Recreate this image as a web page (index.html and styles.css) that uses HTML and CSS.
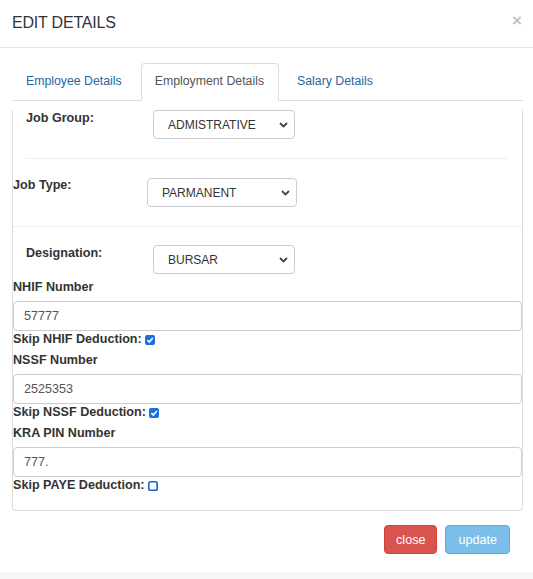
FILE: index.html
```html
<!DOCTYPE html>
<html lang="en">
<head>
    <meta charset="UTF-8">
    <meta name="viewport" content="width=device-width, initial-scale=1.0">
    <title>Edit Details</title>
    <link rel="stylesheet" href="styles.css">
</head>
<body>
    <div class="modal">
        <!-- Header -->
        <div class="modal-header">
            <h4 class="modal-title">EDIT DETAILS</h4>
            <span class="close">&times;</span>
        </div>

        <!-- Body with tabs -->
        <div class="modal-body">
            <ul class="nav-tabs">
                <li><a href="#">Employee Details</a></li>
                <li class="active"><a href="#">Employment Details</a></li>
                <li><a href="#">Salary Details</a></li>
            </ul>

            <div class="tab-panel">
                <div class="select-row indented">
                    <label>Job Group:</label>
                    <div class="select-wrap">
                        <select><option>ADMISTRATIVE</option></select>
                        <svg class="chevron" width="9" height="6" viewBox="0 0 9 6"><path d="M1 1 L4.5 4.5 L8 1" fill="none" stroke="#444" stroke-width="1.8"/></svg>
                    </div>
                </div>
                <hr class="divider-short">

                <div class="select-row">
                    <label class="wide">Job Type:</label>
                    <div class="select-wrap">
                        <select class="long"><option>PARMANENT</option></select>
                        <svg class="chevron" width="9" height="6" viewBox="0 0 9 6"><path d="M1 1 L4.5 4.5 L8 1" fill="none" stroke="#444" stroke-width="1.8"/></svg>
                    </div>
                </div>
                <hr class="divider-full">

                <div class="select-row indented row-last">
                    <label>Designation:</label>
                    <div class="select-wrap">
                        <select><option>BURSAR</option></select>
                        <svg class="chevron" width="9" height="6" viewBox="0 0 9 6"><path d="M1 1 L4.5 4.5 L8 1" fill="none" stroke="#444" stroke-width="1.8"/></svg>
                    </div>
                </div>

                <label class="field-label">NHIF Number</label>
                <input class="form-control" type="text" value="57777">
                <div class="skip-row">
                    <span>Skip NHIF Deduction:</span>
                    <svg class="check" width="10" height="10" viewBox="0 0 10 10"><rect width="10" height="10" rx="2" fill="#1b6fe2"/><path d="M2.4 5.1 L4.3 7 L7.8 2.9" fill="none" stroke="#fff" stroke-width="1.6"/></svg>
                </div>

                <label class="field-label">NSSF Number</label>
                <input class="form-control" type="text" value="2525353">
                <div class="skip-row">
                    <span>Skip NSSF Deduction:</span>
                    <svg class="check" width="10" height="10" viewBox="0 0 10 10"><rect width="10" height="10" rx="2" fill="#1b6fe2"/><path d="M2.4 5.1 L4.3 7 L7.8 2.9" fill="none" stroke="#fff" stroke-width="1.6"/></svg>
                </div>

                <label class="field-label">KRA PIN Number</label>
                <input class="form-control" type="text" value="777.">
                <div class="skip-row">
                    <span>Skip PAYE Deduction:</span>
                    <svg class="check" width="10" height="10" viewBox="0 0 10 10"><rect x="0.8" y="0.8" width="8.4" height="8.4" rx="1.8" fill="#fff" stroke="#1a5fd2" stroke-width="1.6"/></svg>
                </div>
            </div>
        </div>

        <!-- Footer -->
        <div class="modal-footer">
            <button class="btn btn-danger">close</button>
            <button class="btn btn-primary" disabled>update</button>
        </div>
    </div>
</body>
</html>
```

FILE: styles.css
```css
/* General styling */
html {
    background-color: #f6f6f6;
}
body {
    margin: 0;
    font-family: "Liberation Sans", Arial, Helvetica, sans-serif;
    font-size: 12.6px;
    color: #333;
}
.modal {
    background-color: #fff;
    width: 533px;
}
/* Header */
.modal-header {
    display: flex;
    justify-content: space-between;
    align-items: flex-start;
    padding: 13px 12px 14px 12px;
    border-bottom: 1px solid #e5e5e5;
}
.modal-title {
    margin: 0;
    font-size: 16px;
    font-weight: normal;
    line-height: 20px;
    letter-spacing: -0.2px;
    color: #333;
}
.close {
    font-size: 17px;
    font-weight: bold;
    line-height: 16px;
    color: #c4c4c4;
    margin-right: -1px;
}
/* Tabs */
.modal-body {
    padding: 15px 10px 0 12px;
}
.nav-tabs {
    display: flex;
    list-style: none;
    margin: 0;
    padding: 0;
    border-bottom: 1px solid #ddd;
}
.nav-tabs li {
    margin-right: 4px;
    margin-bottom: -1px;
}
.nav-tabs a {
    display: block;
    padding: 10px 14px 11px 13px;
    font-size: 12.3px;
    line-height: 15px;
    border: 1px solid transparent;
    border-radius: 4px 4px 0 0;
    color: #23679f;
    text-decoration: none;
}
.nav-tabs .active a {
    color: #555;
    background-color: #fff;
    border-color: #ddd;
    border-bottom-color: transparent;
}
.tab-panel {
    border: 1px solid #ddd;
    border-top: none;
    border-radius: 0 0 4px 4px;
    padding-bottom: 17px;
}
/* Select rows */
.select-row {
    display: flex;
    align-items: flex-start;
    margin-top: 9px;
}
.select-row.indented {
    padding-left: 13px;
}
.select-row.row-last {
    margin-top: 18px;
}
.select-row label {
    width: 127px;
    font-weight: bold;
    line-height: 15px;
    padding-top: 1px;
}
.select-row label.wide {
    width: 134px;
    padding-top: 0;
}
.divider-short + .select-row {
    margin-top: 19px;
}
.select-wrap {
    position: relative;
}
.select-wrap select {
    appearance: none;
    -webkit-appearance: none;
    width: 142px;
    height: 29px;
    padding: 0 14px;
    border: 1px solid #ccc;
    border-radius: 4px;
    background-color: #fff;
    font-family: inherit;
    font-size: 12px;
    color: #333;
}
.select-wrap select.long {
    width: 150px;
}
.chevron {
    position: absolute;
    right: 7px;
    top: 12px;
}
.divider-short {
    border: 0;
    border-top: 1px solid #eee;
    margin: 19px 14px 0 13px;
}
.divider-full {
    border: 0;
    border-top: 1px solid #eee;
    margin: 19px 0 0 0;
}
/* Inputs */
.field-label {
    display: block;
    font-weight: bold;
    line-height: 15px;
    margin-top: 6px;
    margin-bottom: 6px;
}
.form-control {
    display: block;
    box-sizing: border-box;
    width: 100%;
    height: 30px;
    padding: 0 10px;
    border: 1px solid #ccc;
    border-radius: 4px;
    font-family: inherit;
    font-size: 12.6px;
    color: #555;
}
.skip-row {
    display: flex;
    align-items: center;
    gap: 3px;
    margin-top: 1px;
    font-weight: bold;
    line-height: 15px;
}
.check {
    margin-top: 1px;
}
/* Footer */
.modal-footer {
    display: flex;
    justify-content: flex-end;
    gap: 8px;
    padding: 14px 23px 18px 0;
}
.btn {
    height: 29px;
    padding: 0 12px;
    border-radius: 4px;
    font-family: inherit;
    font-size: 12.6px;
    color: #fff;
    cursor: pointer;
}
.btn-danger {
    background-color: #d9534f;
    border: 1px solid #d43f3a;
    padding: 0 11px;
}
.btn-primary {
    background-color: #7cbeea;
    border: 1px solid #5ea9de;
}
```
